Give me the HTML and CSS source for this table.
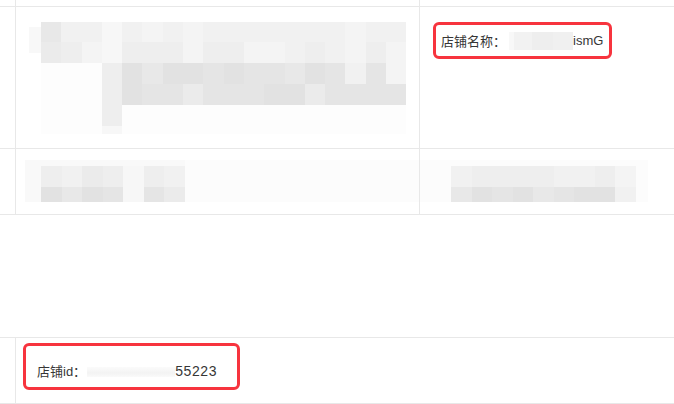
FILE: index.html
```html
<!DOCTYPE html>
<html lang="zh-CN">
<head>
<meta charset="utf-8">
<title>店铺信息</title>
<link rel="stylesheet" href="styles.css">
</head>
<body>
<div class="sheet">
  <div class="row head">
    <div class="cell"></div>
    <div class="cell"></div>
    <div class="cell last"></div>
  </div>

  <div class="row r1">
    <div class="cell"></div>
    <div class="cell pic-cell">
      <div class="pic-wrap">
        <i class="pic-edge"></i>
        <div class="mosaic">
          <i class="s6"></i><i class="s3"></i><i class="s3"></i><i class="s1"></i><i class="s3"></i><i class="s2"></i><i class="s3"></i><i class="s2"></i><i class="s3"></i><i class="s3"></i><i class="s3"></i><i class="s3"></i><i class="s3"></i><i class="s3"></i><i class="s3"></i><i class="s2"></i><i class="s3"></i><i class="s3"></i>
          <i class="s5"></i><i class="s4"></i><i class="s2"></i><i class="s1"></i><i class="s4"></i><i class="s4"></i><i class="s4"></i><i class="s2"></i><i class="s4"></i><i class="s4"></i><i class="s2"></i><i class="s2"></i><i class="s3"></i><i class="s4"></i><i class="s3"></i><i class="s2"></i><i class="s4"></i><i class="s2"></i>
          <i class="s0"></i><i class="s0"></i><i class="s0"></i><i class="s4"></i><i class="s8"></i><i class="s6"></i><i class="s8"></i><i class="s8"></i><i class="s7"></i><i class="s8"></i><i class="s7"></i><i class="s7"></i><i class="s6"></i><i class="s8"></i><i class="s7"></i><i class="s3"></i><i class="s7"></i><i class="s2"></i>
          <i class="s0"></i><i class="s0"></i><i class="s0"></i><i class="s4"></i><i class="s8"></i><i class="s7"></i><i class="s7"></i><i class="s5"></i><i class="s7"></i><i class="s7"></i><i class="s7"></i><i class="s8"></i><i class="s8"></i><i class="s5"></i><i class="s7"></i><i class="s7"></i><i class="s7"></i><i class="s7"></i>
          <i class="s0"></i><i class="s0"></i><i class="s0"></i><i class="s4"></i><i class="s0"></i><i class="s0"></i><i class="s0"></i><i class="s0"></i><i class="s0"></i><i class="s0"></i><i class="s0"></i><i class="s0"></i><i class="s0"></i><i class="s0"></i><i class="s0"></i><i class="s0"></i><i class="s0"></i><i class="s0"></i>
          <i class="s0"></i><i class="s0"></i><i class="s0"></i><i class="s1"></i><i class="s0"></i><i class="s0"></i><i class="s0"></i><i class="s0"></i><i class="s0"></i><i class="s0"></i><i class="s0"></i><i class="s0"></i><i class="s0"></i><i class="s0"></i><i class="s0"></i><i class="s0"></i><i class="s0"></i><i class="s0"></i>
        </div>
      </div>
    </div>
    <div class="cell last name-cell">
      <div class="mark mark-name">
        <span class="lbl">店铺名称：</span><span class="blur blur-name"></span><span class="val">ismG</span>
      </div>
    </div>
  </div>

  <div class="row r2">
    <div class="cell"></div>
    <div class="cell strip-cell">
      <div class="strip strip-left">
        <i class="f1"></i><i class="f1"></i><i class="f1"></i><i class="f1"></i><i class="f1"></i><i class="f1"></i><i class="f1"></i><i class="f1"></i><i></i>
        <i class="f1"></i><i class="s4"></i><i class="s3"></i><i class="s5"></i><i class="s4"></i><i class="s1"></i><i class="s4"></i><i class="s3"></i><i></i>
        <i class="f1"></i><i class="s8"></i><i class="s6"></i><i class="s8"></i><i class="s7"></i><i class="s1"></i><i class="s7"></i><i class="s5"></i><i></i>
      </div>
    </div>
    <div class="cell last strip-cell-right">
      <div class="strip strip-right">
        <i></i><i></i><i></i><i></i><i></i><i></i><i></i><i></i><i></i><i></i><i></i>
        <i></i><i class="s3"></i><i class="s4"></i><i class="s4"></i><i class="s4"></i><i class="s4"></i><i class="s3"></i><i class="s3"></i><i class="s4"></i><i class="s2"></i><i></i>
        <i></i><i class="s6"></i><i class="s8"></i><i class="s7"></i><i class="s8"></i><i class="s6"></i><i class="s7"></i><i class="s8"></i><i class="s8"></i><i class="s3"></i><i></i>
      </div>
    </div>
  </div>

  <div class="spacer"></div>

  <div class="row r3">
    <div class="cell"></div>
    <div class="cell last id-cell">
      <div class="mark mark-id">
        <span class="lbl">店铺id：</span><span class="blur blur-id"></span><span class="num">55223</span>
      </div>
    </div>
  </div>
</div>
</body>
</html>
```

FILE: styles.css
```css
* {
  box-sizing: border-box;
}

html, body {
  margin: 0;
  padding: 0;
  background: #ffffff;
}

body {
  width: 674px;
  height: 404px;
  overflow: hidden;
  font-family: "Liberation Sans", "Noto Sans CJK SC", sans-serif;
  color: #363636;
}

.sheet {
  display: flex;
  flex-direction: column;
}

.row {
  display: grid;
  grid-template-columns: 16px 404px 1fr;
  border-bottom: 1px solid #e8e8e8;
}

.cell {
  border-right: 1px solid #e8e8e8;
}

.cell.last {
  border-right: none;
}

.head {
  height: 7px;
}

.r1 {
  height: 142px;
}

.r2 {
  height: 66px;
}

.spacer {
  height: 122px;
}

.r3 {
  grid-template-columns: 16px 1fr;
  border-top: 1px solid #e8e8e8;
  height: 67px;
}

/* row 1 picture mosaic */
.pic-cell {
  padding: 15px 0 0 13px;
}

.pic-wrap {
  display: flex;
  align-items: flex-start;
}

.pic-edge {
  display: block;
  width: 12px;
  height: 26px;
  margin-top: 5px;
  background: #f8f8f8;
}

.mosaic {
  display: grid;
  grid-template-columns: repeat(18, 20.3px);
  grid-template-rows: 20px 21px 21px 21px 21px 8px;
}

.mosaic i,
.strip i {
  display: block;
}

.s0 { background: #fdfdfd; }
.s1 { background: #f7f7f7; }
.s2 { background: #f4f4f4; }
.s3 { background: #f1f1f1; }
.s4 { background: #eeeeee; }
.s5 { background: #ebebeb; }
.s6 { background: #e8e8e8; }
.s7 { background: #e5e5e5; }
.s8 { background: #e2e2e2; }
.f1 { background: #f9f9f9; }

/* row 2 strips */
.strip-cell {
  padding: 11px 0 0 9px;
}

.strip {
  display: grid;
  grid-template-rows: 6px 21px 15px;
  background: #fcfcfc;
}

.strip-left {
  grid-template-columns: 16px repeat(7, 20.5px) 1fr;
}

.strip-cell-right {
  padding-top: 11px;
}

.strip-right {
  width: 228px;
  grid-template-columns: 31px repeat(9, 20.5px) 1fr;
}

/* red marks */
.mark {
  display: flex;
  align-items: center;
  border: 3px solid #f7343e;
  border-radius: 6px;
  white-space: nowrap;
}

.name-cell {
  padding: 15px 0 0 13px;
}

.mark-name {
  width: 179px;
  height: 37px;
  padding-left: 5px;
  font-size: 13px;
}

.blur {
  display: inline-block;
}

.blur-name {
  width: 64px;
  height: 18px;
  margin-left: 3px;
  background: linear-gradient(to right, #f8f8f8 0 5px, #f2f2f2 5px 23px, #eeeeee 23px 44px, #f0f0f0 44px);
}

.id-cell {
  padding: 5px 0 0 7px;
}

.mark-id {
  width: 217px;
  height: 47px;
  padding: 8px 0 0 11px;
  font-size: 13px;
}

.blur-id {
  width: 88px;
  height: 10px;
  margin: 2px 0 0 1px;
  background: linear-gradient(to bottom, #fbfbfb, #f3f3f3 60%, #fafafa);
}

.num {
  font-size: 14px;
  letter-spacing: 0.6px;
}
```
